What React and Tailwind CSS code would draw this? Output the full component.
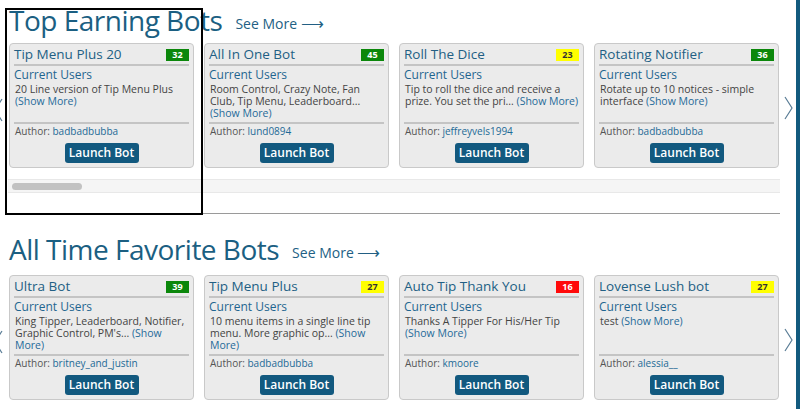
import React from 'react';

const topBots = [
  { name: 'Tip Menu Plus 20', users: 32, color: 'green', desc: '20 Line version of Tip Menu Plus', author: 'badbadbubba' },
  { name: 'All In One Bot', users: 45, color: 'green', desc: 'Room Control, Crazy Note, Fan Club, Tip Menu, Leaderboard...', author: 'lund0894' },
  { name: 'Roll The Dice', users: 23, color: 'yellow', desc: 'Tip to roll the dice and receive a prize. You set the pri...', author: 'jeffreyvels1994' },
  { name: 'Rotating Notifier', users: 36, color: 'green', desc: 'Rotate up to 10 notices - simple interface', author: 'badbadbubba' },
];

const favBots = [
  { name: 'Ultra Bot', users: 39, color: 'green', desc: "King Tipper, Leaderboard, Notifier, Graphic Control, PM's...", author: 'britney_and_justin' },
  { name: 'Tip Menu Plus', users: 27, color: 'yellow', desc: '10 menu items in a single line tip menu. More graphic op...', author: 'badbadbubba' },
  { name: 'Auto Tip Thank You', users: 16, color: 'red', desc: 'Thanks A Tipper For His/Her Tip', author: 'kmoore' },
  { name: 'Lovense Lush bot', users: 27, color: 'yellow', desc: 'test', author: 'alessia__' },
];

const badgeStyles = {
  green: 'bg-[#0b870b] text-white',
  yellow: 'bg-[#ffff00] text-[#333]',
  red: 'bg-[#ff0a0a] text-white',
};

function BotCard({ bot }) {
  return (
    <div className="w-[185px] h-[125px] shrink-0 flex flex-col bg-[#ebebeb] border border-[#c9c9c9] rounded-[4px] px-[4px] pt-[1px] pb-[4px]">
      <div className="flex items-center justify-between h-[21px] border-b-2 border-[#c4c4c4]">
        <span className="text-[13.5px] text-[#225f84] leading-none">{bot.name}</span>
        <span className={`w-[23px] h-[12px] text-[9px] font-bold leading-[12px] text-center ${badgeStyles[bot.color]}`}>{bot.users}</span>
      </div>
      <div className="text-[12px] leading-[15px] text-[#1f6690] mt-[1px]">Current Users</div>
      <p className="text-[10.5px] leading-[12px] text-[#444] pl-[1px] mr-[-3px] mt-[1px]">
        {bot.desc} <span className="text-[#1f6a99]">(Show More)</span>
      </p>
      <div className="mt-auto border-t-2 border-[#c4c4c4] pt-[1px] px-[1px]">
        <div className="text-[10px] leading-[13px] text-[#555]">
          Author: <span className="text-[#1d6a96]">{bot.author}</span>
        </div>
        <div className="flex justify-center mt-[5px]">
          <button className="w-[74px] h-[20px] rounded-[3px] bg-[#12597f] text-white text-[12px] font-semibold leading-[20px]">Launch Bot</button>
        </div>
      </div>
    </div>
  );
}

function Chevron({ dir }) {
  return (
    <svg width="9" height="24" viewBox="0 0 9 24" className="text-[#5a7d96]">
      {dir === 'right' ? (
        <polyline points="1,1 8,12 1,23" fill="none" stroke="currentColor" strokeWidth="1.2" />
      ) : (
        <polyline points="8,1 1,12 8,23" fill="none" stroke="currentColor" strokeWidth="1.2" />
      )}
    </svg>
  );
}

function Carousel({ bots }) {
  return (
    <div className="relative pl-[9px]">
      <div className="absolute left-[-6px] top-[55px]"><Chevron dir="left" /></div>
      <div className="flex gap-[10px]">
        {bots.map((b) => <BotCard key={b.name} bot={b} />)}
      </div>
      <div className="absolute left-[784px] top-[53px]"><Chevron dir="right" /></div>
    </div>
  );
}

function SectionTitle({ title }) {
  return (
    <div className="flex items-end pl-[9px] h-[32px]">
      <h2 className="text-[28px] leading-[32px] text-[#1b5f82] tracking-[-0.5px]">{title}</h2>
      <a className="ml-[13px] mb-[2px] text-[14px] leading-[20px] text-[#225f84]">See More <span className="text-[16px]">⟶</span></a>
    </div>
  );
}

export default function App() {
  return (
    <div className="relative w-[800px] h-[409px] overflow-hidden flex bg-white" style={{ fontFamily: '"Open Sans", "Noto Sans", sans-serif' }}>
      <div className="flex-1 pt-[4px]">
        <SectionTitle title="Top Earning Bots" />
        <div className="mt-[7px]">
          <Carousel bots={topBots} />
        </div>
        <div className="ml-[8px] w-[772px] mt-[11px] h-[14px] bg-[#f5f5f5] border-y border-[#e8e8e8] flex items-center pl-[4px]">
          <div className="w-[70px] h-[7px] rounded-full bg-[#c2c2c2]" />
        </div>
        <div className="ml-[8px] w-[772px] mt-[20px] border-t border-[#9a9a9a]" />
        <div className="mt-[19px]">
          <SectionTitle title="All Time Favorite Bots" />
        </div>
        <div className="mt-[10px]">
          <Carousel bots={favBots} />
        </div>
      </div>
      <div className="w-[4px] bg-[#125a7e]" />
      <div className="absolute left-[5px] top-[8px] w-[198px] h-[207px] border-2 border-black pointer-events-none" />
    </div>
  );
}
